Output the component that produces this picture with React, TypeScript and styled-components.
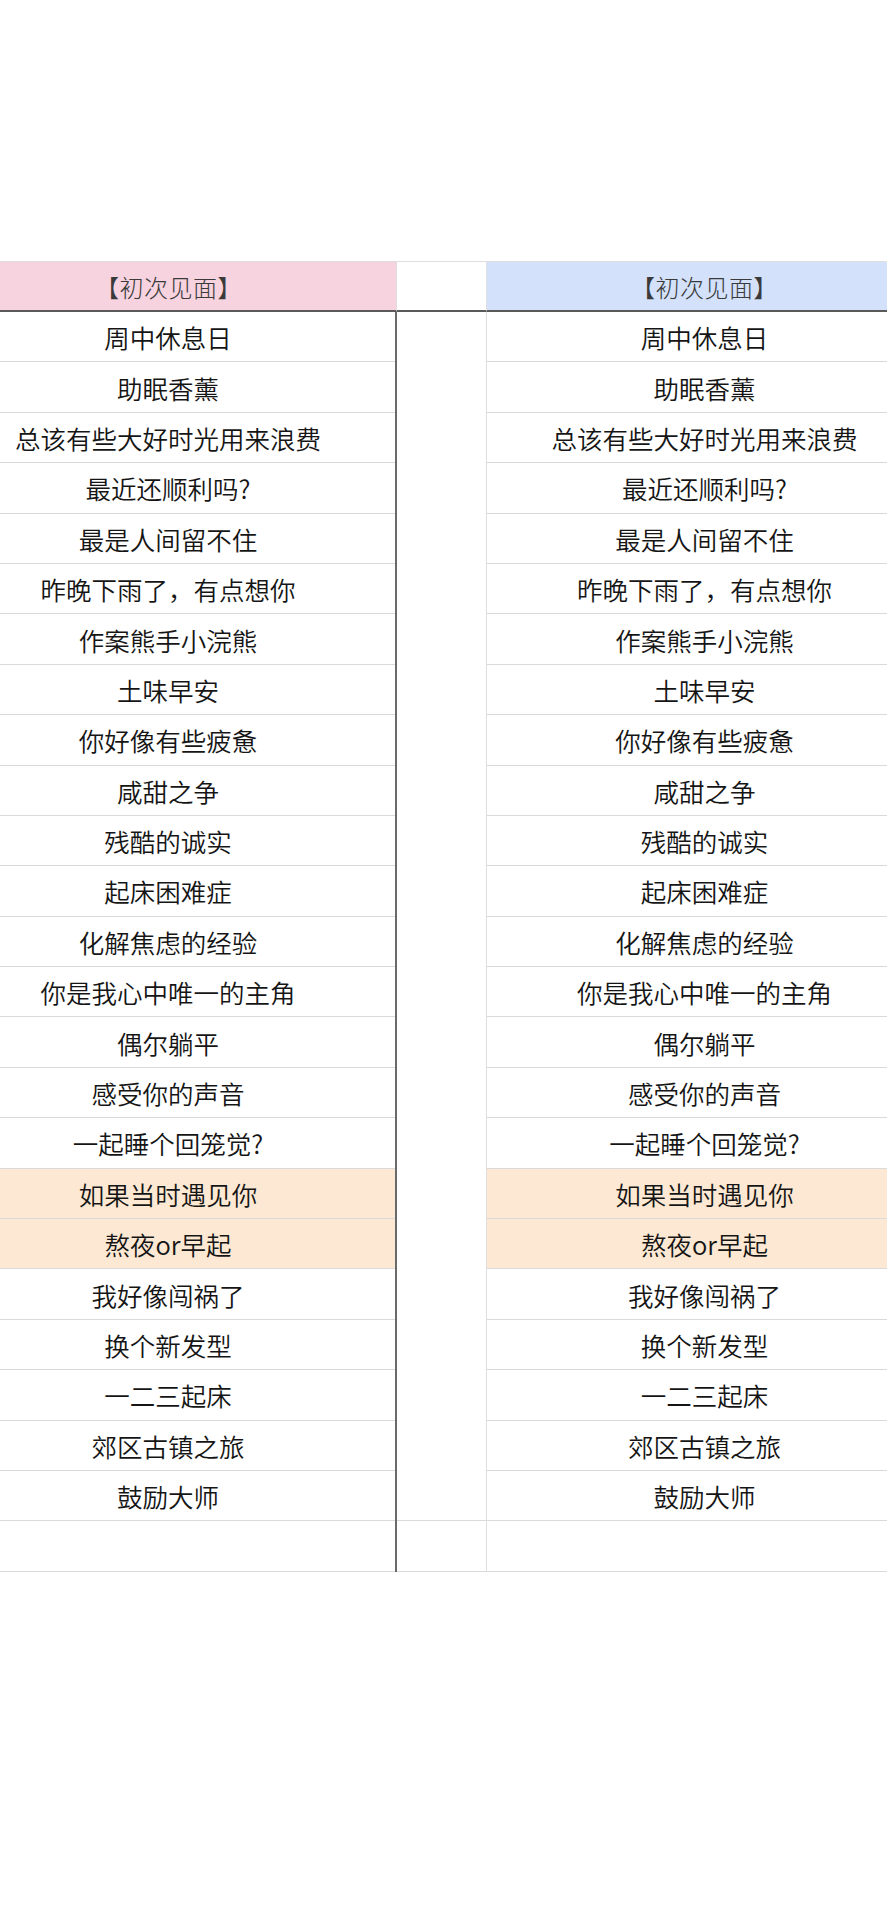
import { styled, createGlobalStyle } from "styled-components";

const GlobalStyle = createGlobalStyle`
  html, body {
    margin: 0;
    padding: 0;
    background: #ffffff;
  }
  body {
    font-family: "Noto Sans CJK SC", "Noto Sans", sans-serif;
  }
`;

const titles = [
  "周中休息日",
  "助眠香薰",
  "总该有些大好时光用来浪费",
  "最近还顺利吗?",
  "最是人间留不住",
  "昨晚下雨了，有点想你",
  "作案熊手小浣熊",
  "土味早安",
  "你好像有些疲惫",
  "咸甜之争",
  "残酷的诚实",
  "起床困难症",
  "化解焦虑的经验",
  "你是我心中唯一的主角",
  "偶尔躺平",
  "感受你的声音",
  "一起睡个回笼觉?",
  "如果当时遇见你",
  "熬夜or早起",
  "我好像闯祸了",
  "换个新发型",
  "一二三起床",
  "郊区古镇之旅",
  "鼓励大师",
  "",
];

const highlighted = [17, 18];

const Page = styled.div`
  width: 887px;
  height: 1920px;
  overflow: hidden;
  padding-top: 261px;
  box-sizing: border-box;
`;

const Sheet = styled.div`
  display: flex;
  margin-left: -59px;
`;

const Column = styled.div<{ $width: number }>`
  display: flex;
  flex-direction: column;
  flex: 0 0 ${(p) => p.$width}px;
  width: ${(p) => p.$width}px;
`;

const HeaderCell = styled.div<{ $bg: string }>`
  height: 51px;
  box-sizing: border-box;
  display: flex;
  align-items: center;
  justify-content: center;
  background: ${(p) => p.$bg};
  border-top: 1px solid #dedede;
  border-bottom: 2px solid #5a5a5a;
  border-right: 1px solid #dedede;
  color: #3a3a3a;
  font-size: 24px;
  font-weight: 300;
  letter-spacing: 0.5px;
`;

const Body = styled.div<{ $divider: boolean }>`
  display: flex;
  flex-direction: column;
  border-right: ${(p) => (p.$divider ? "2px solid #6a6a6a" : "1px solid #dedede")};
`;

const Cell = styled.div<{ $mark?: boolean; $lined?: boolean }>`
  height: 50.4px;
  box-sizing: border-box;
  display: flex;
  align-items: center;
  justify-content: center;
  background: ${(p) => (p.$mark ? "#fde9d3" : "transparent")};
  border-bottom: 1px solid ${(p) => (p.$lined === false ? "transparent" : "#dadada")};
  color: #151515;
  font-size: 25.5px;
  font-weight: 350;
  white-space: nowrap;
`;

const TitleColumn = ({ width, bg, divider }: { width: number; bg: string; divider: boolean }) => (
  <Column $width={width}>
    <HeaderCell $bg={bg}>【初次见面】</HeaderCell>
    <Body $divider={divider}>
      {titles.map((t, i) => (
        <Cell key={i} $mark={highlighted.includes(i)}>
          {t}
        </Cell>
      ))}
    </Body>
  </Column>
);

const App = () => {
  return (
    <>
      <GlobalStyle />
      <Page>
        <Sheet>
          <TitleColumn width={456} bg="#f7d3df" divider={true} />
          <Column $width={90}>
            <HeaderCell $bg="#ffffff" />
            <Body $divider={false}>
              {titles.map((_, i) => (
                <Cell key={i} $lined={i >= titles.length - 2} />
              ))}
            </Body>
          </Column>
          <TitleColumn width={436} bg="#d3e1fa" divider={false} />
        </Sheet>
      </Page>
    </>
  );
};

export default App;
